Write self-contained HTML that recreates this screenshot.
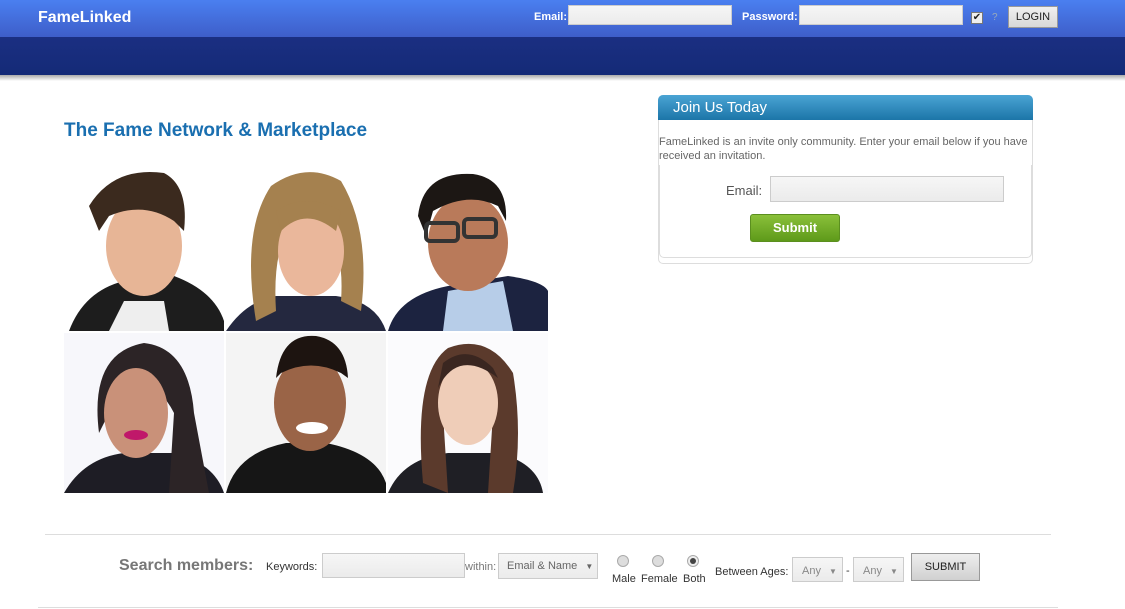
<!DOCTYPE html>
<html><head><meta charset="utf-8"><style>
*{box-sizing:border-box;margin:0;padding:0}
body{width:1125px;height:609px;overflow:hidden;background:#fff;font-family:"Liberation Sans",Arial,sans-serif;position:relative}
.abs{position:absolute}
#top{left:0;top:0;width:1125px;height:37px;background:linear-gradient(#4a7ff0,#3e5ec9)}
#nav{left:0;top:37px;width:1125px;height:38px;background:linear-gradient(#1b2f82,#142a77)}
#sh{left:0;top:75px;width:1125px;height:6px;background:linear-gradient(#aaa,#fff)}
.logo{left:38px;top:9px;color:#fff;font-weight:bold;font-size:16px}
.lbl{color:#fff;font-weight:bold;font-size:11px}
.tin{background:linear-gradient(#f6f6f6,#ebebeb);border:1px solid #ccc;height:20px}
</style></head><body>
<div id="top" class="abs"></div><div id="nav" class="abs"></div><div id="sh" class="abs"></div>
<div class="abs logo">FameLinked</div>
<div class="abs lbl" style="left:534px;top:11px">Email:</div>
<div class="abs tin" style="left:568px;top:5px;width:164px"></div>
<div class="abs lbl" style="left:742px;top:11px">Password:</div>
<div class="abs tin" style="left:799px;top:5px;width:164px"></div>
<div class="abs" style="left:971px;top:12px;width:12px;height:12px;background:#eee;border:1px solid #777;font-size:10px;line-height:10px;text-align:center;color:#222">✔</div>
<div class="abs" style="left:992px;top:12px;color:#9ab;font-size:10px">?</div>
<div class="abs" style="left:1008px;top:6px;width:50px;height:22px;background:linear-gradient(#f0f0f0,#d8d8d8);border:1px solid #999;font-size:11px;line-height:20px;text-align:center;color:#222">LOGIN</div>

<div class="abs" style="left:64px;top:120px;color:#1a6fb0;font-size:19px;font-weight:bold">The Fame Network &amp; Marketplace</div>

<svg class="abs" style="left:64px;top:171px" width="484" height="322" viewBox="0 0 484 322">
<rect width="484" height="322" fill="#fff"/>
<g><rect x="0" y="0" width="160" height="160" fill="#fff"/>
<path d="M5 160 Q20 120 60 110 L110 105 Q150 120 160 150 L160 160Z" fill="#1d1d1d"/>
<path d="M45 160 L60 130 L100 130 L105 160Z" fill="#eee"/>
<ellipse cx="80" cy="75" rx="38" ry="50" fill="#e7b596"/>
<path d="M25 35 Q50 -5 100 2 Q125 15 120 60 L110 50 Q80 30 45 45 L35 60Z" fill="#3b2a1e"/></g>
<g transform="translate(162,0)"><rect width="160" height="160" fill="#fff"/>
<path d="M0 160 Q20 130 50 125 L110 125 Q150 130 160 160Z" fill="#24283f"/>
<path d="M30 150 Q15 60 45 15 Q80 -10 115 10 Q145 60 135 140 L115 130 Q120 60 80 40 Q45 60 50 140Z" fill="#a5814f"/>
<ellipse cx="85" cy="80" rx="33" ry="45" fill="#eab79b"/>
<path d="M50 40 Q80 20 115 40 L110 60 Q80 35 55 60Z" fill="#a5814f"/></g>
<g transform="translate(324,0)"><rect width="160" height="160" fill="#fff"/>
<path d="M0 160 Q10 125 60 115 L120 105 Q155 110 160 120 L160 160Z" fill="#1c2340"/>
<path d="M55 160 L60 120 L115 110 L125 160Z" fill="#b7cde8"/>
<ellipse cx="80" cy="72" rx="40" ry="48" fill="#b97a5a"/>
<path d="M30 45 Q35 0 85 3 Q120 8 118 50 L110 35 Q80 20 45 40 L38 65Z" fill="#1c1714"/>
<rect x="38" y="52" width="32" height="18" rx="4" fill="none" stroke="#333" stroke-width="4"/>
<rect x="76" y="48" width="32" height="18" rx="4" fill="none" stroke="#333" stroke-width="4"/></g>
<g transform="translate(0,162)"><rect width="160" height="160" fill="#f7f7fb"/>
<path d="M0 160 Q20 125 60 120 L110 120 Q150 130 160 160Z" fill="#1e1d25"/>
<path d="M35 100 Q25 20 80 10 Q125 15 130 80 L145 160 L105 160 L110 80 Q90 40 55 60Z" fill="#2c2426"/>
<ellipse cx="72" cy="80" rx="32" ry="45" fill="#c99179"/>
<ellipse cx="72" cy="102" rx="12" ry="5" fill="#c0186a"/></g>
<g transform="translate(162,162)"><rect width="160" height="160" fill="#f4f4f4"/>
<path d="M0 160 Q10 120 60 110 L100 110 Q150 120 160 150 L160 160Z" fill="#161616"/>
<ellipse cx="84" cy="70" rx="36" ry="48" fill="#9a6447"/>
<path d="M50 45 Q55 0 90 3 Q120 8 122 45 L115 40 Q85 25 55 40Z" fill="#1d1410"/>
<ellipse cx="86" cy="95" rx="16" ry="6" fill="#fff"/></g>
<g transform="translate(324,162)"><rect width="160" height="160" fill="#fbfbfd"/>
<path d="M0 160 Q15 125 60 120 L110 120 Q150 130 155 160Z" fill="#1f1f25"/>
<path d="M35 150 Q25 40 60 15 Q100 0 125 40 Q135 100 125 160 L100 160 L105 80 Q80 40 55 80 L60 160Z" fill="#5b3a2c"/>
<ellipse cx="80" cy="70" rx="30" ry="42" fill="#efcdb8"/>
<path d="M50 55 Q70 15 110 45 L105 35 Q80 10 55 30Z" fill="#3a2620"/></g>
</svg>

<div class="abs" style="left:658px;top:95px;width:375px;height:169px;border:1px solid #ddd;border-radius:5px"></div>
<div class="abs" style="left:658px;top:95px;width:375px;height:25px;background:linear-gradient(#4aa4d4,#1c75a8);border-radius:5px 5px 0 0;color:#fff;font-size:15px;padding:4px 0 0 15px">Join Us Today</div>
<div class="abs" style="left:659px;top:135px;width:372px;font-size:11px;color:#666;line-height:14px">FameLinked is an invite only community. Enter your email below if you have received an invitation.</div>
<div class="abs" style="left:659px;top:165px;width:373px;height:93px;border:1px solid #ddd;border-top:none;border-radius:0 0 5px 5px"></div>
<div class="abs" style="left:726px;top:183px;font-size:13px;color:#555">Email:</div>
<div class="abs tin" style="left:770px;top:176px;width:234px;height:26px"></div>
<div class="abs" style="left:750px;top:214px;width:90px;height:28px;background:linear-gradient(#8ac03a,#5e9a1a);border:1px solid #5b8f1f;border-radius:3px;color:#fff;font-weight:bold;font-size:13px;text-align:center;line-height:26px">Submit</div>

<div class="abs" style="left:45px;top:534px;width:1006px;height:1px;background:#ddd"></div>
<div class="abs" style="left:38px;top:607px;width:1020px;height:1px;background:#ddd"></div>
<div class="abs" style="left:119px;top:557px;font-size:16px;font-weight:bold;color:#777">Search members:</div>
<div class="abs" style="left:266px;top:561px;font-size:11px;color:#333">Keywords:</div>
<div class="abs tin" style="left:322px;top:553px;width:143px;height:25px"></div>
<div class="abs" style="left:465px;top:561px;font-size:11px;color:#777">within:</div>
<div class="abs tin" style="left:498px;top:553px;width:100px;height:26px;font-size:11px;color:#666;padding:6px 0 0 8px">Email &amp; Name <span style="font-size:8px;margin-left:5px">▼</span></div>
<div class="abs" style="left:617px;top:555px;width:12px;height:12px;border-radius:50%;background:#ddd;border:1px solid #aaa"></div>
<div class="abs" style="left:652px;top:555px;width:12px;height:12px;border-radius:50%;background:#ddd;border:1px solid #aaa"></div>
<div class="abs" style="left:687px;top:555px;width:12px;height:12px;border-radius:50%;background:#eee;border:1px solid #aaa"><div style="margin:2px;width:6px;height:6px;border-radius:50%;background:#444"></div></div>
<div class="abs" style="left:612px;top:573px;font-size:11px;color:#333">Male</div>
<div class="abs" style="left:641px;top:573px;font-size:11px;color:#333">Female</div>
<div class="abs" style="left:683px;top:573px;font-size:11px;color:#333">Both</div>
<div class="abs" style="left:715px;top:566px;font-size:11px;color:#333">Between Ages:</div>
<div class="abs tin" style="left:792px;top:557px;width:51px;height:25px;font-size:11px;color:#888;padding:7px 0 0 9px">Any <span style="font-size:8px;margin-left:5px">▼</span></div>
<div class="abs" style="left:846px;top:565px;font-size:11px;color:#333">-</div>
<div class="abs tin" style="left:853px;top:557px;width:51px;height:25px;font-size:11px;color:#888;padding:7px 0 0 9px">Any <span style="font-size:8px;margin-left:5px">▼</span></div>
<div class="abs" style="left:911px;top:553px;width:69px;height:28px;background:linear-gradient(#eee,#d0d0d0);border:1px solid #999;font-size:11px;text-align:center;line-height:26px;color:#222">SUBMIT</div>
</body></html>
